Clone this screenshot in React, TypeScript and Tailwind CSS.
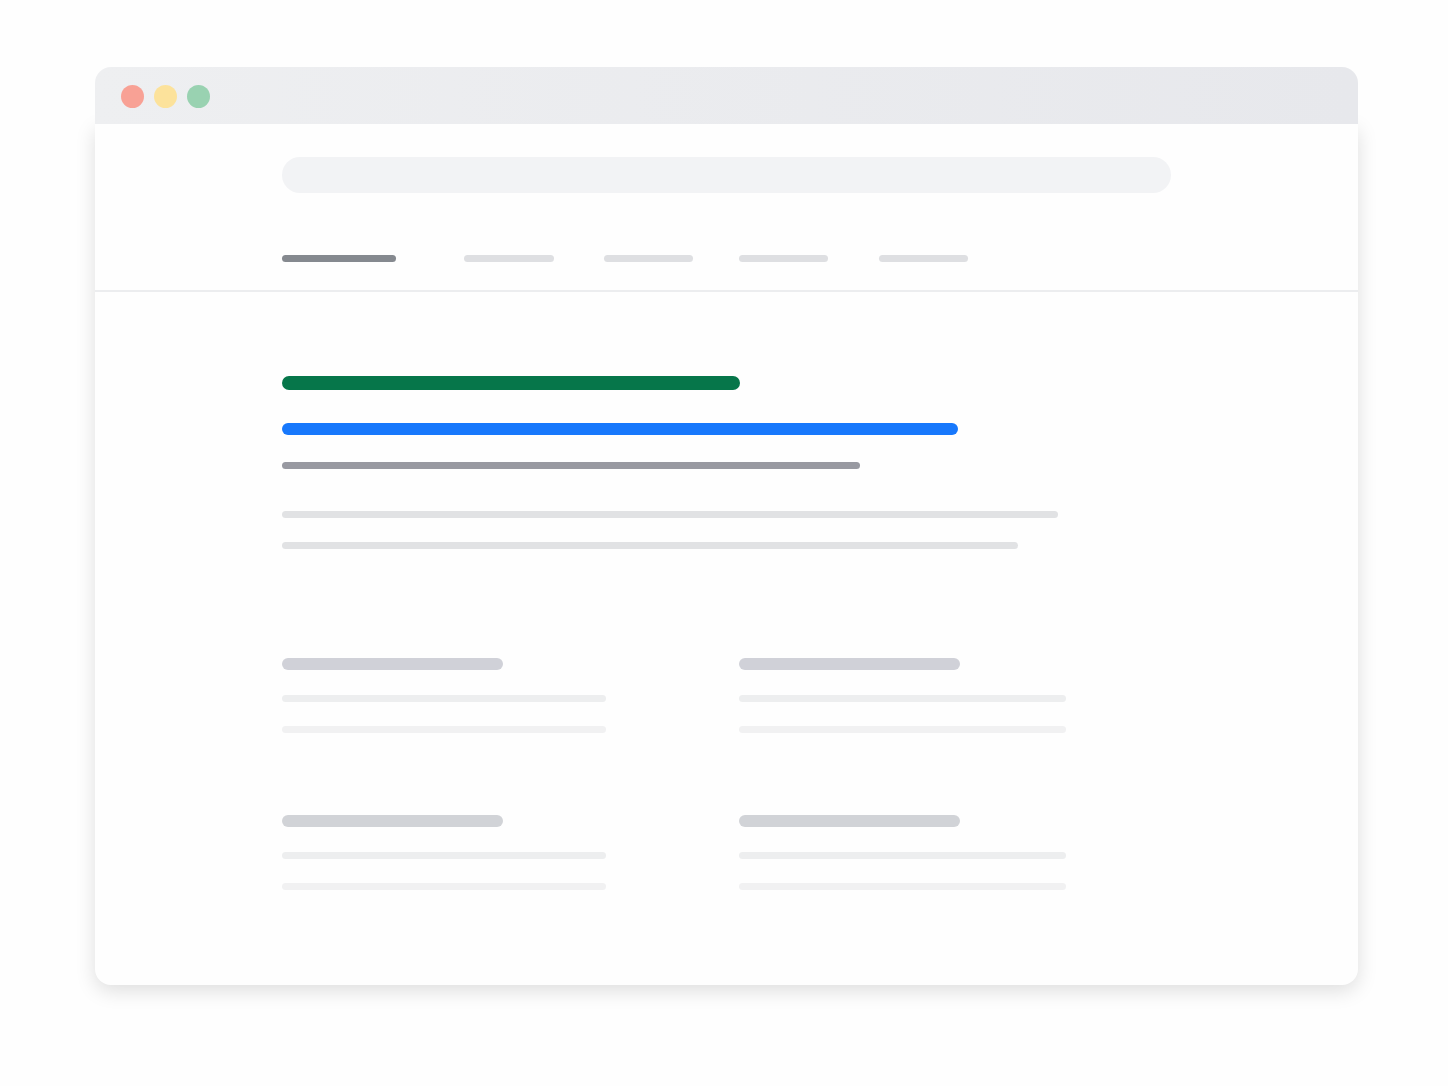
import clsx from 'clsx'

interface BarProps {
  className: string
}

interface SitelinkProps {
  titleColor: string
  lineWidth: string
}

const tabs = [
  'w-[114px] bg-[#85898f]',
  'w-[90px] bg-[#dedfe2]',
  'w-[89px] bg-[#dedfe2]',
  'w-[89px] bg-[#dedfe2]',
  'w-[89px] bg-[#dedfe2]',
]

const sitelinks: SitelinkProps[] = [
  { titleColor: 'bg-[#d0d1d8]', lineWidth: 'w-[324px]' },
  { titleColor: 'bg-[#d0d1d8]', lineWidth: 'w-[327px]' },
  { titleColor: 'bg-[#d1d3d7]', lineWidth: 'w-[324px]' },
  { titleColor: 'bg-[#d1d3d7]', lineWidth: 'w-[327px]' },
]

function Bar({ className }: BarProps) {
  return <div className={clsx('max-w-full rounded-full', className)} />
}

function TitleBar() {
  return (
    <div className="relative flex h-[57px] gap-[10px] rounded-t-2xl bg-linear-to-r from-[#eeeff1] to-[#e7e8ec] pt-[18px] pl-[26px]">
      <span className="size-[23px] rounded-full bg-[#f8a195]" />
      <span className="size-[23px] rounded-full bg-[#fce29b]" />
      <span className="size-[23px] rounded-full bg-[#99d2b1]" />
    </div>
  )
}

function Sitelink({ titleColor, lineWidth }: SitelinkProps) {
  return (
    <div className="flex flex-col">
      <Bar className={clsx('h-[12px] w-[221px]', titleColor)} />
      <Bar className={clsx('mt-[25px] h-[7px] bg-[#edeeef]', lineWidth)} />
      <Bar className={clsx('mt-[24px] h-[7px] bg-[#f1f1f2]', lineWidth)} />
    </div>
  )
}

export default function App() {
  return (
    <div className="min-h-screen bg-[#fefefe] pt-[67px] pr-[90px] pb-[100px] pl-[95px] font-['Roboto',sans-serif]">
      <div>
        <TitleBar />

        <div className="rounded-b-2xl bg-[#fefefe] shadow-[0_6px_20px_rgba(0,0,0,0.13)]">
          <header className="border-b-2 border-[#ecedef] px-[187px] pt-[33px] pb-[28px]">
            <input
              type="search"
              aria-label="Search"
              className="block h-9 w-full rounded-full bg-[#f2f3f5] px-4 text-sm outline-none"
            />
            <nav className="mt-[62px] grid grid-cols-[182px_140px_135px_140px_90px]">
              {tabs.map((tab, index) => (
                <Bar key={index} className={clsx('h-[7px]', tab)} />
              ))}
            </nav>
          </header>

          <main className="px-[187px] pt-[84px] pb-[95px]">
            <Bar className="h-[14px] w-[458px] bg-[#06764a]" />
            <Bar className="mt-[33px] h-[12px] w-[676px] bg-[#1778fc]" />
            <Bar className="mt-[27px] h-[7px] w-[578px] bg-[#9899a1]" />
            <Bar className="mt-[42px] h-[7px] w-[776px] bg-[#e1e2e4]" />
            <Bar className="mt-[24px] h-[7px] w-[736px] bg-[#e1e2e4]" />

            <div className="mt-[109px] grid grid-cols-2 gap-x-[25px] gap-y-[82px]">
              {sitelinks.map((link, index) => (
                <Sitelink key={index} {...link} />
              ))}
            </div>
          </main>
        </div>
      </div>
    </div>
  )
}
